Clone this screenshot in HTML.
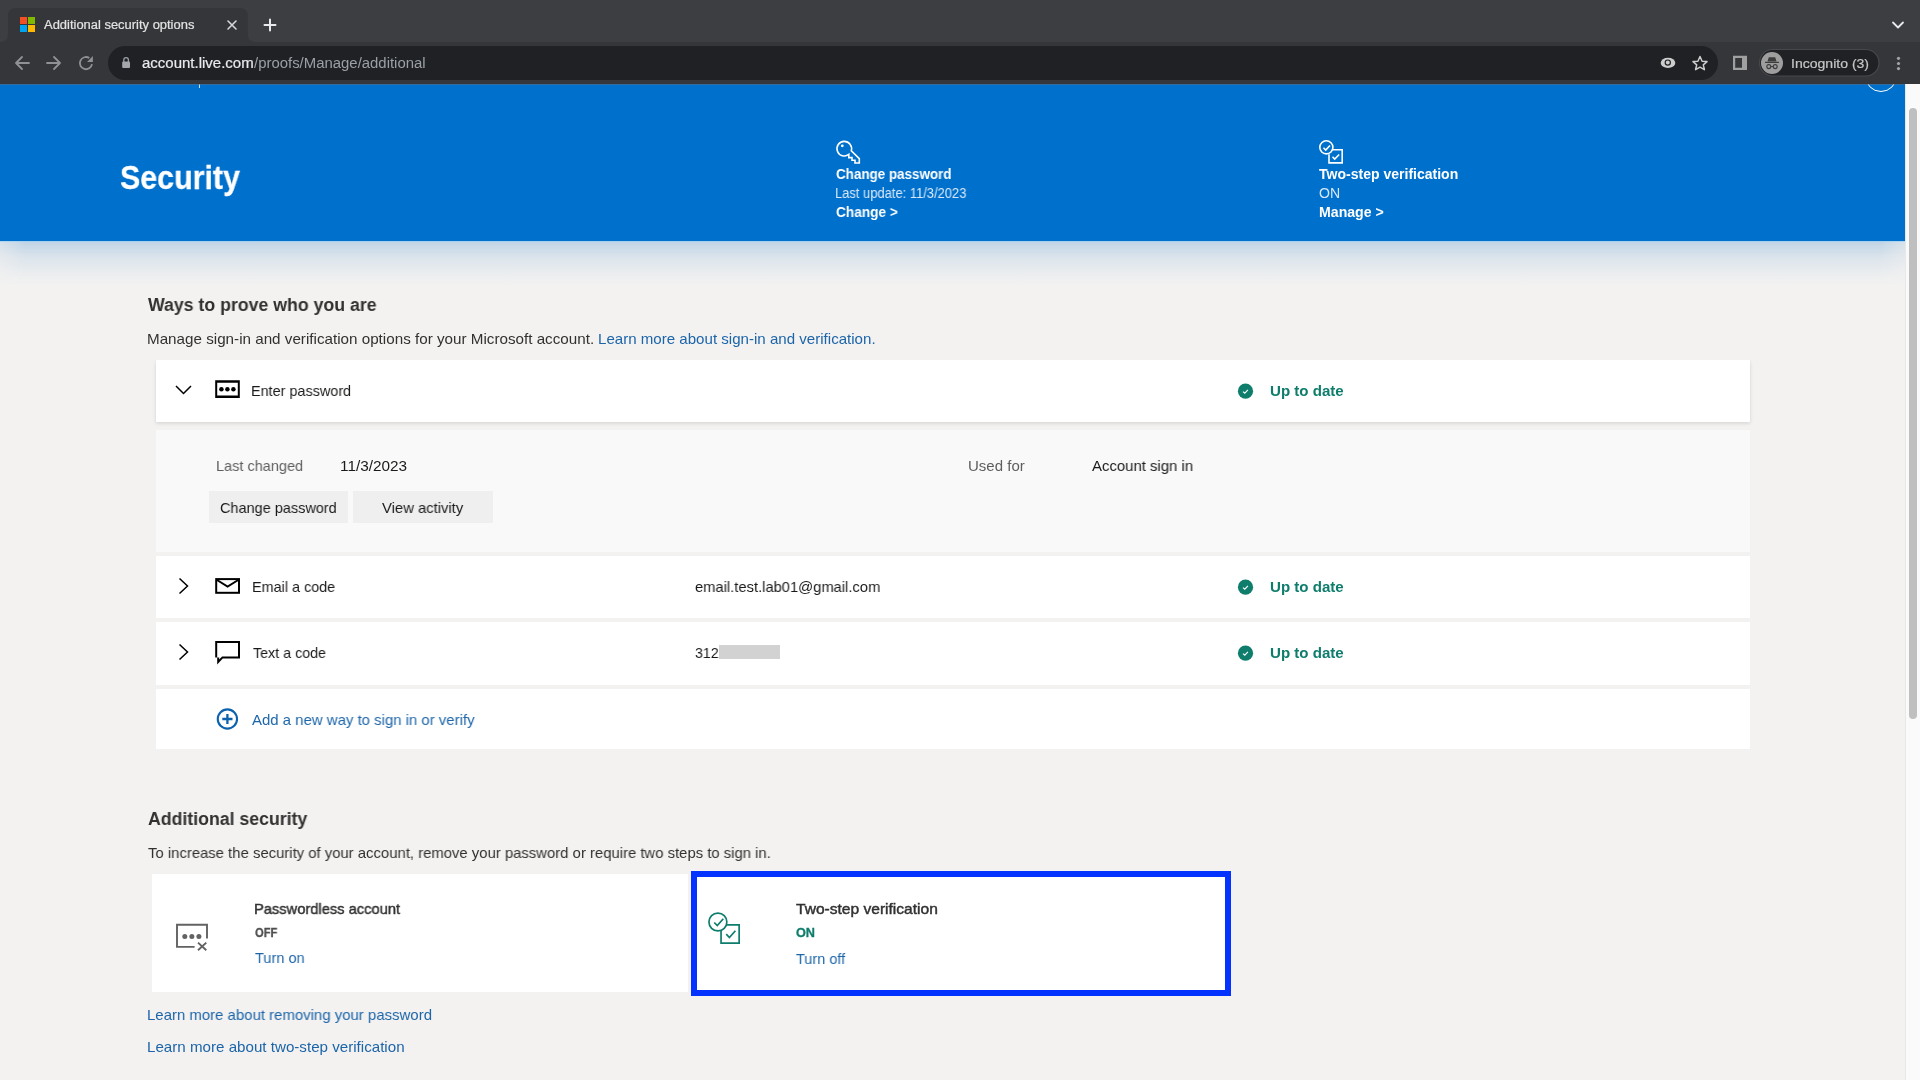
<!DOCTYPE html>
<html><head><meta charset="utf-8"><title>Additional security options</title>
<style>
*{margin:0;padding:0;box-sizing:border-box}
html,body{width:1920px;height:1080px;overflow:hidden;background:#f3f2f1;font-family:"Liberation Sans",sans-serif}
.a{position:absolute}
.t{position:absolute;white-space:nowrap;line-height:1;transform-origin:0 0;will-change:transform}
svg{position:absolute;overflow:visible}
</style></head>
<body>

<!-- chrome -->
<div class="a" style="left:0;top:0;width:1920px;height:42px;background:#3c3e41"></div>

<div class="a" style="left:0;top:42px;width:1920px;height:42px;background:#35363a"></div>
<svg style="left:0;top:0" width="1920" height="84">
  <path d="M0 42 Q8 42 8 34 V16 Q8 8 16 8 H239.8 Q247.8 8 247.8 16 V34 Q247.8 42 255.8 42 Z" fill="#35363a"/>
  <rect x="20" y="17" width="7" height="7" fill="#f25022"/>
  <rect x="28" y="17" width="7" height="7" fill="#7fba00"/>
  <rect x="20" y="25" width="7" height="7" fill="#00a4ef"/>
  <rect x="28" y="25" width="7" height="7" fill="#ffb900"/>
  <path d="M228 21 L236 29 M236 21 L228 29" stroke="#d5d7da" stroke-width="1.6" stroke-linecap="round"/>
  <path d="M270 19.5 V30.5 M264.5 25 H275.5" stroke="#e8eaed" stroke-width="2" stroke-linecap="round"/>
  <path d="M1893 22.5 L1898 27.5 L1903 22.5" stroke="#e8eaed" stroke-width="1.8" fill="none" stroke-linecap="round" stroke-linejoin="round"/>
  <!-- nav -->
  <path d="M16 63 H29 M22 57 L16 63 L22 69" stroke="#8f9194" stroke-width="1.8" fill="none" stroke-linecap="round" stroke-linejoin="round"/>
  <path d="M47 63 H60 M54 57 L60 63 L54 69" stroke="#8f9194" stroke-width="1.8" fill="none" stroke-linecap="round" stroke-linejoin="round"/>
  <path d="M92 64.1 A6.1 6.1 0 1 1 89.3 58" stroke="#8f9194" stroke-width="1.8" fill="none"/>
  <path d="M92.9 56 L92.9 61.9 L87.1 61.9 Z" fill="#8f9194"/>
  <!-- omnibox -->
  <rect x="108" y="46" width="1610" height="34" rx="17" fill="#202124"/>
  <path d="M123.8 62 V60 A2.3 2.3 0 0 1 128.4 60 V62" stroke="#9aa0a6" stroke-width="1.3" fill="none"/>
  <rect x="122.2" y="61.6" width="7.8" height="6.3" rx="1" fill="#a3a6ab"/>
  <!-- eye -->
  <ellipse cx="1668" cy="62.9" rx="7.3" ry="5.1" fill="#cdcdcd"/>
  <circle cx="1667.8" cy="62.6" r="2.6" fill="none" stroke="#202124" stroke-width="1.2"/>
  <!-- star -->
  <path d="M1700 56.5 L1702.1 61.2 L1707 61.6 L1703.3 64.9 L1704.4 69.7 L1700 67.2 L1695.6 69.7 L1696.7 64.9 L1693 61.6 L1697.9 61.2 Z" stroke="#cdcdcd" stroke-width="1.5" fill="none" stroke-linejoin="round"/>
  <!-- side panel -->
  <path d="M1733 55.8 H1747 V70 H1733 Z M1735.2 58 V67.7 H1742 V58 Z" fill="#a0a0a0" fill-rule="evenodd"/>
  <!-- incognito pill -->
  <rect x="1759.5" y="49.5" width="119.5" height="26.5" rx="13.25" fill="#202124" stroke="#47484b" stroke-width="1.2"/>
  <circle cx="1772" cy="63" r="11" fill="#9e9e9e"/>
  <path d="M1767.5 61.5 L1768.8 57.3 H1775.2 L1776.5 61.5 Z" fill="#3c3c3c"/>
  <rect x="1765" y="61.8" width="14" height="1.2" fill="#3c3c3c"/>
  <circle cx="1768.8" cy="66.6" r="2" stroke="#3c3c3c" stroke-width="1.1" fill="none"/>
  <circle cx="1775.2" cy="66.6" r="2" stroke="#3c3c3c" stroke-width="1.1" fill="none"/>
  <path d="M1770.8 66.6 H1773.2" stroke="#3c3c3c" stroke-width="1"/>
  <circle cx="1898.5" cy="58.3" r="1.6" fill="#a3a3a3"/>
  <circle cx="1898.5" cy="63.5" r="1.6" fill="#a3a3a3"/>
  <circle cx="1898.5" cy="68.6" r="1.6" fill="#a3a3a3"/>
</svg>

<!-- page -->
<div class="a" style="left:0;top:84px;width:1905px;height:996px;background:#f3f2f1;overflow:hidden">
  <div class="a" style="left:0;top:157px;width:1905px;height:44px;background:linear-gradient(to bottom, rgba(0,100,190,0.21), rgba(0,100,190,0.09) 40%, rgba(0,100,190,0.03) 75%, rgba(0,100,190,0) 100%);-webkit-mask-image:linear-gradient(to right, rgba(0,0,0,.55), #000 25px, #000 1880px, rgba(0,0,0,.55))"></div>
  <div class="a" style="left:0;top:157px;width:1905px;height:1px;background:rgba(150,205,245,0.6)"></div>
  <div class="a" style="left:0;top:0;width:1905px;height:157px;background:#0070cd"></div>
  <div class="a" style="left:1865px;top:-24px;width:32px;height:32px;border:1px solid #fff;border-radius:50%"></div>
  <div class="a" style="left:199px;top:0;width:1px;height:4px;background:#bfe3ff"></div>
</div>
<div class="a" style="left:0;top:84px;width:1905px;height:1px;background:rgba(100,102,108,0.5)"></div>
<!-- scrollbar -->
<div class="a" style="left:1905px;top:84px;width:15px;height:996px;background:#fafafa;border-left:1px solid #e8e8e8"></div>
<div class="a" style="left:1909px;top:108px;width:8px;height:611px;background:#bfbfbf;border-radius:4px"></div>

<!-- header icons -->
<svg style="left:0;top:0" width="1920" height="300">
  <g stroke="#fff" stroke-width="1.6" fill="none" stroke-linejoin="miter">
    <path d="M848.8 154.4 A7.3 7.3 0 1 1 851.3 150.7 L859.3 158.7 V163 H855 V160.3 H852 V157.6 H848.8 Z"/>
  </g>
  <circle cx="842.3" cy="145.8" r="1.4" fill="#fff"/>
  <g stroke="#fff" stroke-width="1.6" fill="none">
    <circle cx="1326.35" cy="147.35" r="6.55"/>
    <path d="M1323.5 147.8 L1325.7 150 L1330 145.5"/>
    <path d="M1332.6 149.8 H1342.2 V162.9 H1329 V154.2"/>
    <path d="M1332.5 156.7 L1334.7 159 L1339.2 154.5"/>
  </g>
</svg>

<!-- cards -->
<div class="a" style="left:156px;top:360px;width:1594px;height:62px;background:#fff;box-shadow:0 1.6px 3.6px rgba(0,0,0,.13),0 0.3px 0.9px rgba(0,0,0,.11)"></div>
<div class="a" style="left:156px;top:430px;width:1594px;height:122px;background:#f9f9f9"></div>
<div class="a" style="left:209px;top:491px;width:139px;height:32px;background:#efefef"></div>
<div class="a" style="left:353px;top:491px;width:140px;height:32px;background:#efefef"></div>
<div class="a" style="left:156px;top:556px;width:1594px;height:62px;background:#fff"></div>
<div class="a" style="left:156px;top:622px;width:1594px;height:63px;background:#fff"></div>
<div class="a" style="left:156px;top:689px;width:1594px;height:60px;background:#fff"></div>
<div class="a" style="left:719px;top:645px;width:61px;height:14px;background:#d2d2d2"></div>

<div class="a" style="left:152px;top:874px;width:536px;height:118px;background:#fff"></div>
<div class="a" style="left:691px;top:871px;width:540px;height:125px;background:#fff;border:6px solid #0433ff"></div>

<svg style="left:0;top:0" width="1920" height="1080">
  <!-- chevrons -->
  <path d="M176 386 L183.5 393.5 L191 386" stroke="#000" stroke-width="1.5" fill="none"/>
  <path d="M179.5 578.5 L187.5 586 L179.5 593.5" stroke="#000" stroke-width="1.5" fill="none"/>
  <path d="M179.5 644.5 L187.5 652 L179.5 659.5" stroke="#000" stroke-width="1.5" fill="none"/>
  <!-- password icon -->
  <path d="M215.2 380.2 H239.8 V397.9 H215.2 Z M217.2 382.8 V395.4 H237.8 V382.8 Z" fill="#000" fill-rule="evenodd"/>
  <circle cx="221.4" cy="389.2" r="2.25" fill="#000"/>
  <circle cx="227.4" cy="389.2" r="2.25" fill="#000"/>
  <circle cx="233.4" cy="389.2" r="2.25" fill="#000"/>
  <!-- mail -->
  <rect x="216.2" y="579.1" width="22.8" height="13.7" stroke="#000" stroke-width="2" fill="none"/>
  <path d="M217 580 L227.6 586.6 L238.2 580" stroke="#000" stroke-width="2" fill="none"/>
  <!-- chat -->
  <path d="M216.2 657.4 V642.1 H239 V657.4 H222.5 L218.2 662 V657.4" stroke="#000" stroke-width="2" fill="none" stroke-linejoin="miter"/>
  <!-- check circles -->
  <g>
    <circle cx="1245.5" cy="391.2" r="7.6" fill="#0e7d6c"/>
    <path d="M1243 391.6 L1244.8 393.2 L1247.9 389.9" stroke="#fff" stroke-width="1.15" fill="none"/>
    <circle cx="1245.5" cy="587.2" r="7.6" fill="#0e7d6c"/>
    <path d="M1243 587.6 L1244.8 589.2 L1247.9 585.9" stroke="#fff" stroke-width="1.15" fill="none"/>
    <circle cx="1245.5" cy="653.2" r="7.6" fill="#0e7d6c"/>
    <path d="M1243 653.6 L1244.8 655.2 L1247.9 651.9" stroke="#fff" stroke-width="1.15" fill="none"/>
  </g>
  <!-- plus circle -->
  <circle cx="227.4" cy="719" r="9.65" stroke="#0c62ad" stroke-width="2.1" fill="none"/>
  <path d="M227.4 714 V724 M222.3 719 H232.5" stroke="#0c62ad" stroke-width="2.3"/>
  <!-- passwordless icon -->
  <path d="M194.6 946.9 H177 V924.8 H207 V938.5" stroke="#626262" stroke-width="1.9" fill="none"/>
  <circle cx="184.8" cy="936.5" r="2.5" fill="#626262"/>
  <circle cx="191.85" cy="936.5" r="2.5" fill="#626262"/>
  <circle cx="198.9" cy="936.5" r="2.5" fill="#626262"/>
  <path d="M198 942.6 L206.3 950.3 M206.3 942.6 L198 950.3" stroke="#626262" stroke-width="1.9"/>
  <!-- two-step icon teal -->
  <g stroke="#0e7d6c" stroke-width="1.7" fill="none">
    <circle cx="717.9" cy="922" r="8.95"/>
    <path d="M714.2 922.5 L717.3 925.6 L723.3 918.75"/>
    <path d="M726.3 924.85 H739.15 V943.15 H721.05 V930.2"/>
    <path d="M726.25 934.2 L729.4 937.5 L735.4 930.8"/>
  </g>
</svg>

<div class="t" id="tabtitle" style="left:44.20px;top:19.02px;font-size:12.5px;font-weight:400;color:#e3e3e3;transform:scaleX(1.0354);-webkit-text-stroke:0.2px #e3e3e3">Additional security options</div>
<div class="t" id="url1" style="left:142.30px;top:55.95px;font-size:14px;font-weight:400;color:#e8eaed;transform:scaleX(1.0704);-webkit-text-stroke:0.2px #e8eaed">account.live.com</div>
<div class="t" id="url2" style="left:253.50px;top:55.95px;font-size:14px;font-weight:400;color:#9aa0a6;transform:scaleX(1.0652)">/proofs/Manage/additional</div>
<div class="t" id="incog" style="left:1790.62px;top:56.90px;font-size:13px;font-weight:400;color:#c4c7c5;transform:scaleX(1.0799);-webkit-text-stroke:0.2px #c4c7c5">Incognito (3)</div>
<div class="t" id="sec" style="left:120.40px;top:161.03px;font-size:33.4px;font-weight:700;color:#ffffff;transform:scaleX(0.9100);-webkit-text-stroke:0.3px #ffffff">Security</div>
<div class="t" id="h_cp" style="left:836.25px;top:167.00px;font-size:14px;font-weight:700;color:#ffffff;transform:scaleX(0.9581)">Change password</div>
<div class="t" id="h_lu" style="left:835.33px;top:185.90px;font-size:14px;font-weight:400;color:#d9e8f6;transform:scaleX(0.9239)">Last update: 11/3/2023</div>
<div class="t" id="h_ch" style="left:836.25px;top:205.15px;font-size:14px;font-weight:700;color:#ffffff;transform:scaleX(0.9750)">Change &gt;</div>
<div class="t" id="h_tsv" style="left:1319.40px;top:167.00px;font-size:14px;font-weight:700;color:#ffffff;transform:scaleX(1.0020)">Two-step verification</div>
<div class="t" id="h_on" style="left:1319.40px;top:186.00px;font-size:14px;font-weight:400;color:#d9e8f6;transform:scaleX(1.0055)">ON</div>
<div class="t" id="h_mg" style="left:1319.40px;top:204.95px;font-size:14px;font-weight:700;color:#ffffff;transform:scaleX(1.0092)">Manage &gt;</div>
<div class="t" id="ways" style="left:148.30px;top:296.46px;font-size:18px;font-weight:700;color:#323130;transform:scaleX(0.9842)">Ways to prove who you are</div>
<div class="t" id="manage" style="left:147.29px;top:330.90px;font-size:15px;font-weight:400;color:#323130;transform:scaleX(1.0138)">Manage sign-in and verification options for your Microsoft account.</div>
<div class="t" id="learn1" style="left:597.79px;top:330.90px;font-size:15px;font-weight:400;color:#1c65a9;transform:scaleX(1.0058)">Learn more about sign-in and verification.</div>
<div class="t" id="enterpw" style="left:251.44px;top:382.90px;font-size:15px;font-weight:400;color:#1b1a19;transform:scaleX(0.9609)">Enter password</div>
<div class="t" id="utd1" style="left:1270.00px;top:383.00px;font-size:15px;font-weight:700;color:#0e7d6c;transform:scaleX(1.0056)">Up to date</div>
<div class="t" id="lastch" style="left:216.23px;top:458.10px;font-size:15px;font-weight:400;color:#605e5c;transform:scaleX(0.9670)">Last changed</div>
<div class="t" id="date" style="left:339.58px;top:458.10px;font-size:15px;font-weight:400;color:#1b1a19;transform:scaleX(1.0222)">11/3/2023</div>
<div class="t" id="usedfor" style="left:967.75px;top:458.10px;font-size:15px;font-weight:400;color:#605e5c;transform:scaleX(1.0010)">Used for</div>
<div class="t" id="acct" style="left:1091.75px;top:458.10px;font-size:15px;font-weight:400;color:#1b1a19;transform:scaleX(0.9937)">Account sign in</div>
<div class="t" id="btn1" style="left:220.30px;top:500.30px;font-size:15px;font-weight:400;color:#1b1a19;transform:scaleX(0.9654)">Change password</div>
<div class="t" id="btn2" style="left:382.00px;top:500.30px;font-size:15px;font-weight:400;color:#1b1a19;transform:scaleX(0.9879)">View activity</div>
<div class="t" id="email" style="left:251.74px;top:579.10px;font-size:15px;font-weight:400;color:#1b1a19;transform:scaleX(0.9594)">Email a code</div>
<div class="t" id="emailaddr" style="left:695.20px;top:579.10px;font-size:15px;font-weight:400;color:#1b1a19;transform:scaleX(0.9822)">email.test.lab01@gmail.com</div>
<div class="t" id="utd2" style="left:1270.00px;top:579.00px;font-size:15px;font-weight:700;color:#0e7d6c;transform:scaleX(1.0056)">Up to date</div>
<div class="t" id="text" style="left:252.70px;top:644.90px;font-size:15px;font-weight:400;color:#1b1a19;transform:scaleX(0.9519)">Text a code</div>
<div class="t" id="phone" style="left:695.20px;top:644.70px;font-size:15px;font-weight:400;color:#1b1a19;transform:scaleX(0.9439)">312</div>
<div class="t" id="utd3" style="left:1270.00px;top:645.00px;font-size:15px;font-weight:700;color:#0e7d6c;transform:scaleX(1.0056)">Up to date</div>
<div class="t" id="addnew" style="left:251.90px;top:712.00px;font-size:15px;font-weight:400;color:#1c65a9;transform:scaleX(0.9962)">Add a new way to sign in or verify</div>
<div class="t" id="addsec" style="left:148.30px;top:809.76px;font-size:18px;font-weight:700;color:#323130;transform:scaleX(0.9832)">Additional security</div>
<div class="t" id="toinc" style="left:148.30px;top:845.10px;font-size:15px;font-weight:400;color:#323130;transform:scaleX(0.9908)">To increase the security of your account, remove your password or require two steps to sign in.</div>
<div class="t" id="pwless" style="left:253.82px;top:901.20px;font-size:15px;font-weight:400;color:#323130;transform:scaleX(0.9787);-webkit-text-stroke:0.45px #323130">Passwordless account</div>
<div class="t" id="off" style="left:254.80px;top:927.22px;font-size:12.5px;font-weight:700;color:#4f4e4d;transform:scaleX(0.8952);-webkit-text-stroke:0.3px #4f4e4d">OFF</div>
<div class="t" id="turnon" style="left:254.80px;top:950.40px;font-size:15px;font-weight:400;color:#1c65a9;transform:scaleX(0.9706)">Turn on</div>
<div class="t" id="tsv" style="left:795.70px;top:900.80px;font-size:15px;font-weight:400;color:#323130;transform:scaleX(1.0376);-webkit-text-stroke:0.45px #323130">Two-step verification</div>
<div class="t" id="on" style="left:795.70px;top:926.92px;font-size:12.5px;font-weight:700;color:#0e7d6c;transform:scaleX(1.0148);-webkit-text-stroke:0.3px #0e7d6c">ON</div>
<div class="t" id="turnoff" style="left:795.70px;top:950.50px;font-size:15px;font-weight:400;color:#1c65a9;transform:scaleX(0.9653)">Turn off</div>
<div class="t" id="lm1" style="left:146.80px;top:1007.30px;font-size:15px;font-weight:400;color:#1c65a9;transform:scaleX(0.9963)">Learn more about removing your password</div>
<div class="t" id="lm2" style="left:146.79px;top:1039.20px;font-size:15px;font-weight:400;color:#1c65a9;transform:scaleX(1.0095)">Learn more about two-step verification</div>

</body></html>
